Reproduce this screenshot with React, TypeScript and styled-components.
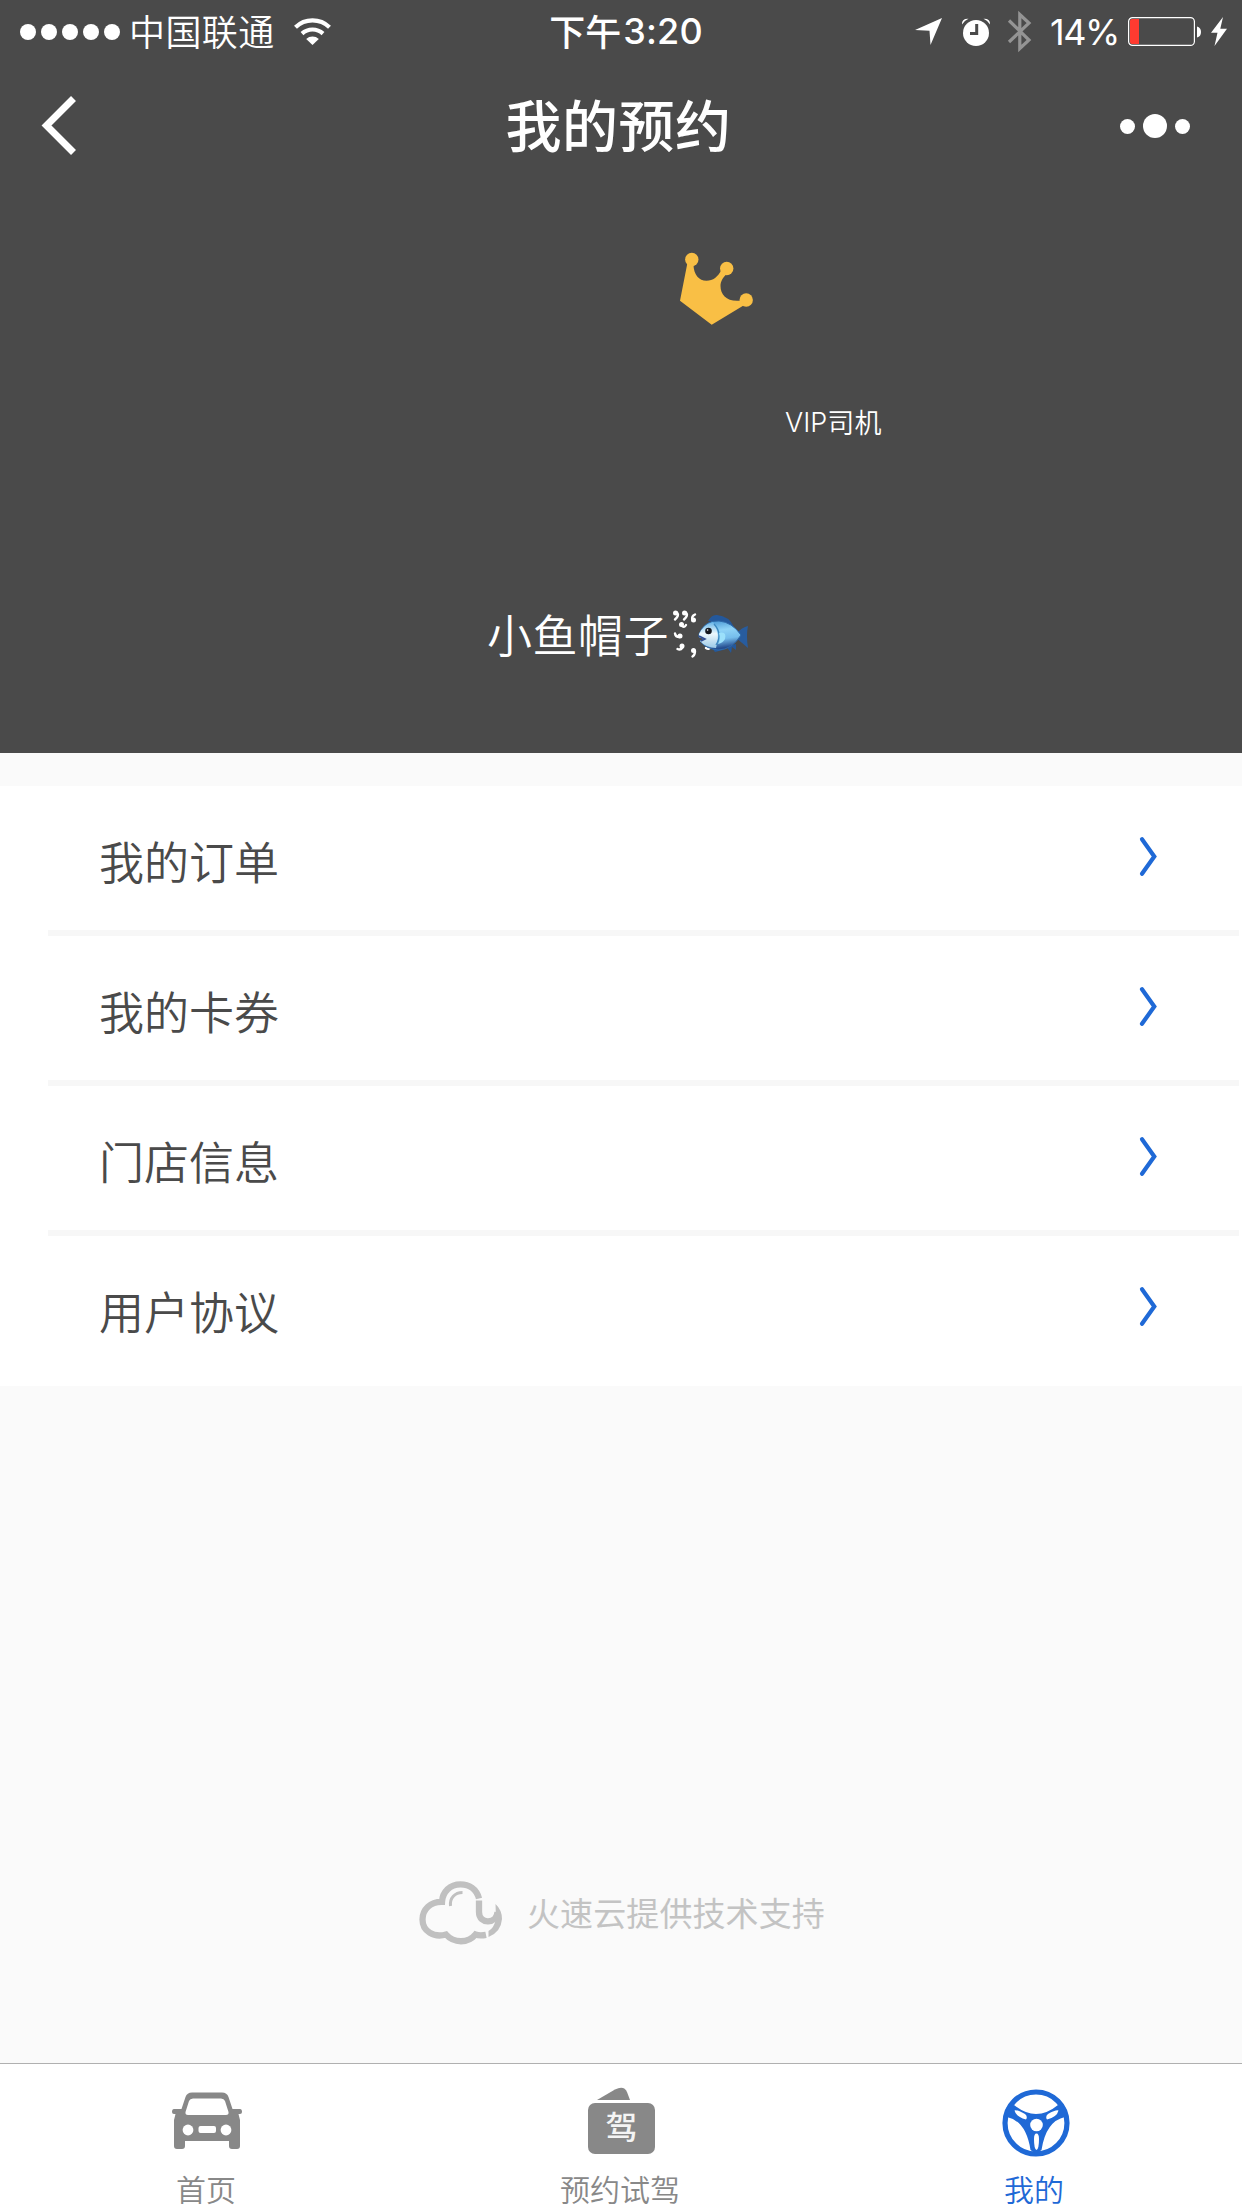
import React from 'react';
import styled, { createGlobalStyle } from 'styled-components';

const cjk = '"Noto Sans CJK SC", "Liberation Sans", sans-serif';
const latin = 'Inter, "Noto Sans CJK SC", sans-serif';
const BLUE = '#1f69d6';
const GRAY = '#888888';

const GlobalStyle = createGlobalStyle`
  * { box-sizing: border-box; }
  body { margin: 0; background: #fafafa; font-family: ${cjk}; }
  svg { display: block; flex: none; overflow: visible; }
`;

const Screen = styled.div`
  width: 1242px;
  height: 2208px;
  display: flex;
  flex-direction: column;
  background: #fafafa;
  overflow: hidden;
`;

const Hero = styled.header`
  height: 753px;
  flex: none;
  display: flex;
  flex-direction: column;
  background: #4a4a4a;
  color: #fff;
`;

const StatusBar = styled.div`
  height: 60px;
  display: grid;
  grid-template-columns: 1fr auto 1fr;
  align-items: center;
  padding: 0 15px 0 20px;
`;

const StatusGroup = styled.div<{ $end?: boolean }>`
  display: flex;
  align-items: center;
  justify-content: ${(p) => (p.$end ? 'flex-end' : 'flex-start')};
`;

const Signal = styled.div`
  display: flex;
  gap: 5px;
  margin-right: 9px;
`;

const SignalDot = styled.i`
  width: 16px;
  height: 16px;
  border-radius: 50%;
  background: #fff;
`;

const Carrier = styled.span`
  font: 350 36px/56px ${cjk};
  letter-spacing: 0.4px;
  margin-right: 19px;
  padding-bottom: 4px;
`;

const Clock = styled.time`
  display: flex;
  align-items: center;
  padding: 0 0 4px 5px;
  font: 500 36px/56px ${cjk};
`;

const ClockDigits = styled.span`
  font: 500 36px/56px ${latin};
  letter-spacing: 0.2px;
  margin: 3px 0 0 2px;
`;

const Percent = styled.span`
  font: 400 36px/60px ${latin};
  letter-spacing: -1.4px;
  margin: 0 9px 0 19px;
`;

const NavBar = styled.nav`
  height: 132px;
  display: grid;
  grid-template-columns: 1fr auto 1fr;
  align-items: center;
  padding: 0 52px 0 42px;
`;

const NavTitle = styled.h1`
  margin: 0;
  padding: 0 0 6px 5px;
  font: 500 56px/80px ${cjk};
  letter-spacing: 0.5px;
`;

const More = styled.div`
  display: flex;
  justify-content: flex-end;
  align-items: center;
  gap: 8px;
`;

const MoreDot = styled.i<{ $size: number }>`
  width: ${(p) => p.$size}px;
  height: ${(p) => p.$size}px;
  border-radius: 50%;
  background: #fff;
`;

const CrownSlot = styled.div`
  margin: 60px 0 0 679px;
  height: 74px;
`;

const Badge = styled.div`
  margin: 81px 0 0 785px;
  display: flex;
  font: 350 27px/30px ${cjk};
  letter-spacing: 0.3px;
`;

const BadgeLatin = styled.span`
  font: 300 27px/30px ${latin};
  letter-spacing: 0;
  padding-top: 1px;
`;

const UserName = styled.div`
  margin: 166px 0 0 487px;
  display: flex;
  align-items: center;
  font: 350 45px/60px ${cjk};
  letter-spacing: 0.5px;
`;

const Menu = styled.ul`
  margin: 33px 0 0;
  padding: 0 3px 0 48px;
  list-style: none;
  background: #fff;
`;

const MenuItem = styled.li`
  height: 150px;
  display: flex;
  align-items: center;
  justify-content: space-between;
  padding: 0 82px 0 51px;
  border-bottom: 6px solid #f7f7f7;
  color: #4a4a4a;
  &:last-child { border-bottom-color: #fff; }
`;

const MenuLabel = styled.span`
  font: 350 45px/60px ${cjk};
  padding-top: 6px;
`;

const Chevron = styled.svg`
  margin-bottom: 3px;
`;

const Support = styled.footer`
  margin-top: auto;
  height: 64px;
  margin-bottom: 118px;
  padding-left: 419px;
  display: flex;
  align-items: center;
  gap: 24px;
  color: #c3c3c3;
`;

const SupportText = styled.span`
  font: 400 33px/44px ${cjk};
  letter-spacing: 0.1px;
  padding-bottom: 3px;
`;

const TabBar = styled.nav`
  height: 145px;
  flex: none;
  display: grid;
  grid-template-columns: repeat(3, 1fr);
  background: #fff;
  border-top: 1px solid #b0b0b0;
`;

const Tab = styled.div<{ $active?: boolean }>`
  display: flex;
  flex-direction: column;
  align-items: center;
  padding-top: 24px;
  color: ${(p) => (p.$active ? BLUE : GRAY)};
`;

const TabIcon = styled.div<{ $shiftX?: number; $shiftY?: number }>`
  height: 68px;
  padding-left: ${(p) => (p.$shiftX ?? 0) * 2}px;
  padding-top: ${(p) => p.$shiftY ?? 0}px;
`;

const TabLabel = styled.span`
  margin: 15px 2px 0 0;
  font: 350 30px/34px ${cjk};
`;

const Wifi = () => (
  <svg width="37" height="27" viewBox="0 0 37 27" fill="none" stroke="#fff" strokeWidth="4.2">
    <path d="M1.5 9.2a24.5 24.5 0 0 1 34 0" />
    <path d="M8 15.6a15.5 15.5 0 0 1 21 0" />
    <path d="M12.2 21a9.5 9.5 0 0 1 12.600 0L18.500 27z" fill="#fff" stroke="none" />
  </svg>
);

const LocationMark = styled.svg`
  margin-right: 20px;
`;

const Location = () => (
  <LocationMark width="27" height="27" viewBox="0 0 27 27">
    <path d="M27 0L15.500 27L14.500 12.800L0 12z" fill="#fff" />
  </LocationMark>
);

const AlarmMark = styled.svg`
  margin-right: 18px;
`;

const Alarm = () => (
  <AlarmMark width="28" height="28" viewBox="0 0 28 28">
    <circle cx="14" cy="15" r="13" fill="#fff" />
    <path d="M0 6.500Q-0.500 0.500 6.500 0.800Q2.500 2.500 0 6.500ZM28 6.500Q28.500 0.500 21.500 0.800Q25.500 2.500 28 6.500Z" fill="#fff" />
    <path d="M14.700 6v9.500H8" stroke="#4a4a4a" strokeWidth="3" fill="none" />
  </AlarmMark>
);

const Bluetooth = () => (
  <svg width="23" height="41" viewBox="0 0 23 41" fill="none" stroke="#949494" strokeWidth="3.2">
    <path d="M1 9.500L21 29L11.800 37.500V3.500L21 12L1 31" />
  </svg>
);

const BatteryMark = styled.svg`
  margin-right: 10px;
`;

const Battery = () => (
  <BatteryMark width="73" height="29" viewBox="0 0 73 29">
    <rect x="0.600" y="0.600" width="65.800" height="27.800" rx="4" fill="none" stroke="#fff" strokeWidth="1.200" />
    <path d="M4 2H11V27H4Q2 27 2 25V4Q2 2 4 2Z" fill="#ff3b30" />
    <path d="M69 9.500Q73 10.500 73 15T69 20.500Z" fill="#fff" />
  </BatteryMark>
);

const Bolt = () => (
  <svg width="16" height="29" viewBox="0 0 16 29">
    <path d="M12 0L0 15.800H6.500L3.500 29L16 11.800H9.300z" fill="#fff" />
  </svg>
);

const Back = () => (
  <svg width="34" height="60" viewBox="0 0 34 60" fill="none" stroke="#fff" strokeWidth="7">
    <path d="M31.500 2.500L4.500 29.500L31.500 56.500" />
  </svg>
);

const Crown = () => (
  <svg width="76" height="74" viewBox="0 0 76 74" fill="#f9bf45">
    <circle cx="12.800" cy="7.500" r="6.700" />
    <circle cx="47.700" cy="16.500" r="6.700" />
    <circle cx="67.200" cy="48" r="6.700" />
    <path d="M8.600 10L1 48.700L32.700 72.700L67 52L61 48.700C48 50 41.500 43 41.500 34C41.500 29 44 25.500 48.500 21L42.500 17.500C39 25 34 28.700 27.500 28.700C20 28.700 14.500 23 14.500 12Z" />
  </svg>
);

const SparkMark = styled.svg`
  margin-left: 4px;
`;

const Sparks = () => (
  <SparkMark width="25" height="50" viewBox="0 0 25 50" fill="none" stroke="#fff" strokeLinecap="round">
    <g fill="#fff" stroke="none">
      <circle cx="2.500" cy="4" r="2.500" />
      <circle cx="11.500" cy="4" r="2.500" />
      <circle cx="20.500" cy="11" r="2.500" />
      <circle cx="8.500" cy="15.500" r="2.500" />
      <circle cx="7" cy="27" r="2.500" />
      <circle cx="9" cy="37" r="2.500" />
      <circle cx="20.500" cy="41.500" r="2.500" />
    </g>
    <path strokeWidth="2.400" d="M4 3.500Q6.500 6.500 2 10.500M13 3.500Q15.500 6.500 11 10.500M19.300 10.500Q18.500 7 22 5.500M8.500 16.500Q11 19.500 13 16M2 24.500Q2.500 28 6.500 28M9.500 38.500Q7.500 41.500 4.500 40M22 42Q22 46 19.500 47.500" />
    <path strokeWidth="2.400" d="M33 39Q36 41 37.500 38" />
  </SparkMark>
);

const Fish = () => (
  <svg width="51" height="40" viewBox="0 0 51 40">
    <defs>
      <linearGradient id="body" x1="0" y1="0" x2="0.200" y2="1">
        <stop offset="0" stopColor="#3f8fd0" />
        <stop offset="0.400" stopColor="#8fd3f7" />
        <stop offset="0.700" stopColor="#75bdec" />
        <stop offset="1" stopColor="#244c8e" />
      </linearGradient>
      <linearGradient id="face" x1="0" y1="0" x2="0" y2="1">
        <stop offset="0" stopColor="#65b4e7" />
        <stop offset="0.450" stopColor="#edf8fd" />
        <stop offset="1" stopColor="#9bc9e7" />
      </linearGradient>
    </defs>
    <path d="M10 7Q14 0 19 1Q31 2 36 13zM28 32L33 39L34 33L38 36L38 30zM14 34L17 38L25 36z" fill="#24589b" />
    <path d="M38 20Q44 13 50 12Q48 21 50 34Q43 28 38 24z" fill="#285c9e" />
    <path d="M1 20Q7 6 21 7Q34 8 43 21Q34 36 20 36Q8 35 2 27L7 25L1 23z" fill="url(#body)" stroke="#2e69a9" strokeWidth="1" />
    <path d="M1 20Q6 10 15 8Q23 20 18 34Q8 34 2 27L7 25L1 23z" fill="url(#face)" />
    <path d="M16 10Q25 20 18 31" fill="none" stroke="#3d88c0" strokeWidth="1.300" />
    <path d="M21 19Q29 17 27 25Q25 29 20 30Q23 25 21 19z" fill="#9be0fb" />
    <path d="M1 22L7 25L3 27" fill="none" stroke="#304c91" strokeWidth="1.600" />
    <circle cx="10.500" cy="17" r="3.300" fill="#141820" />
    <circle cx="9.600" cy="16" r="0.800" fill="#fff" />
  </svg>
);

const Cloud = () => (
  <svg width="84" height="64" viewBox="0 0 84 64" fill="none" stroke="#c0c0c0" strokeWidth="6.300">
    <path d="M60 17.500C57.500 8 50 3.300 41.500 3.300C31 3.300 23.500 11 23 20.800C11.500 20.500 3.500 28.500 3.500 38.500C3.500 50 14.500 57 27 53.500C35 62.500 49 62.500 56.500 53.500Q61 55 67 53.800" />
    <path d="M31.500 25C30.500 17 36 11.500 43.500 11.500" strokeWidth="3" />
    <path d="M60 19.500V31C60 44 78 43 78.500 31" />
    <path d="M76.500 23Q83 29 83 38Q82 51 69.500 56V50Q75 47 77 38z" fill="#c0c0c0" stroke="none" />
  </svg>
);

const CarIcon = () => (
  <svg width="70" height="68" viewBox="0 0 70 68">
    <path fillRule="evenodd" fill={GRAY} d="M20 4.500H50Q55 4.500 56.500 9L60.500 21H68Q70 21 70 24Q70 26 68 26H66.500L68 32V58Q68 61 65 61H60Q57 61 57 58V53H13V58Q13 61 10 61H5Q2 61 2 58V32L3.500 26H2Q0 26 0 24Q0 21 2 21H9.500L13.500 9Q15 4.500 20 4.500ZM21 10.500Q18 10.500 17 13L13.500 24Q13 27 16 27H54Q57 27 56.500 24L53 13Q52 10.500 49 10.500ZM28.500 38Q26.500 38 26.500 40V43Q26.500 45 28.500 45H42Q44 45 44 43V40Q44 38 42 38Z" />
    <circle cx="16" cy="42" r="5.400" fill="#fff" />
    <circle cx="54" cy="42" r="5.400" fill="#fff" />
  </svg>
);

const CardIcon = styled.div`
  width: 67px;
  height: 67px;
  display: flex;
  flex-direction: column;
  gap: 3px;
`;

const CardFace = styled.div`
  width: 67px;
  height: 51px;
  border-radius: 7px;
  background: ${GRAY};
  color: #f4f4f4;
  font: 500 32px/45px ${cjk};
  text-align: center;
`;

const CardFlap = () => (
  <svg width="67" height="12" viewBox="0 0 67 12">
    <path d="M9 12L27 1.500Q36 -3 39 4L42 12z" fill={GRAY} />
  </svg>
);

const WheelIcon = () => (
  <svg width="68" height="68" viewBox="0 0 68 68">
    <circle cx="34" cy="34" r="31" fill="none" stroke={BLUE} strokeWidth="5.200" />
    <path d="M4 19L12 16Q34 34 56 16L64 19L63 28Q44 32 39.500 61L34 65L28.500 61Q24 32 5 28Z" fill={BLUE} />
    <circle cx="34.500" cy="36" r="6.300" fill="#fff" />
    <path d="M12.500 21.500Q15 20.500 23 25Q26 27.500 24 30.500Q14 28 12.500 21.500ZM56.500 21.500Q54 20.500 46 25Q43 27.500 45 30.500Q55 28 56.500 21.500ZM34.500 44.500Q37 44.500 37 50Q37 60 34.500 61Q32 60 32 50Q32 44.500 34.500 44.500Z" fill="#fff" />
  </svg>
);

const menu = ['我的订单', '我的卡券', '门店信息', '用户协议'];

export default function App() {
  return (
    <Screen>
      <GlobalStyle />
      <Hero>
        <StatusBar>
          <StatusGroup>
            <Signal>{[0, 1, 2, 3, 4].map((n) => <SignalDot key={n} />)}</Signal>
            <Carrier>中国联通</Carrier>
            <Wifi />
          </StatusGroup>
          <Clock>下午<ClockDigits>3:20</ClockDigits></Clock>
          <StatusGroup $end>
            <Location />
            <Alarm />
            <Bluetooth />
            <Percent>14%</Percent>
            <Battery />
            <Bolt />
          </StatusGroup>
        </StatusBar>
        <NavBar>
          <Back />
          <NavTitle>我的预约</NavTitle>
          <More>
            <MoreDot $size={15} />
            <MoreDot $size={24} />
            <MoreDot $size={15} />
          </More>
        </NavBar>
        <CrownSlot><Crown /></CrownSlot>
        <Badge><BadgeLatin>VIP</BadgeLatin>司机</Badge>
        <UserName>小鱼帽子<Sparks /><Fish /></UserName>
      </Hero>
      <Menu>
        {menu.map((label) => (
          <MenuItem key={label}>
            <MenuLabel>{label}</MenuLabel>
            <Chevron width="17" height="39" viewBox="0 0 17 39" fill="none" stroke={BLUE} strokeWidth="4.200" strokeLinecap="round">
              <path d="M2 2.200L14.300 19.500L2 36.800" />
            </Chevron>
          </MenuItem>
        ))}
      </Menu>
      <Support>
        <Cloud />
        <SupportText>火速云提供技术支持</SupportText>
      </Support>
      <TabBar>
        <Tab>
          <TabIcon><CarIcon /></TabIcon>
          <TabLabel>首页</TabLabel>
        </Tab>
        <Tab>
          <TabIcon $shiftX={0.5}>
            <CardIcon><CardFlap /><CardFace>驾</CardFace></CardIcon>
          </TabIcon>
          <TabLabel>预约试驾</TabLabel>
        </Tab>
        <Tab $active>
          <TabIcon $shiftX={1} $shiftY={1}><WheelIcon /></TabIcon>
          <TabLabel>我的</TabLabel>
        </Tab>
      </TabBar>
    </Screen>
  );
}
